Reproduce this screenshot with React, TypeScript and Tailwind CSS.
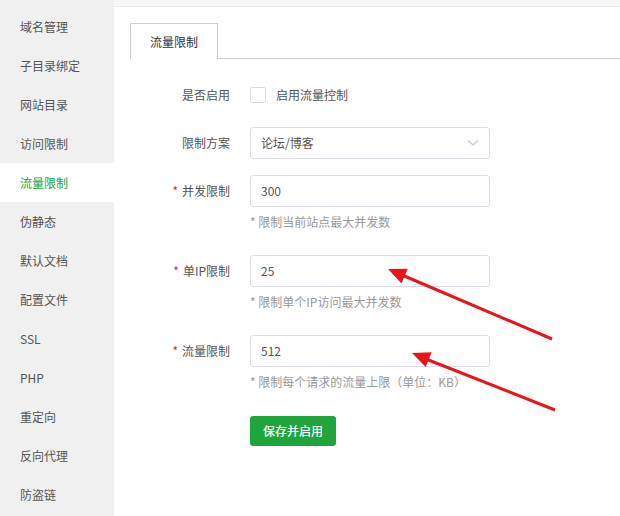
import React from "react";

const items = [
  "域名管理",
  "子目录绑定",
  "网站目录",
  "访问限制",
  "流量限制",
  "伪静态",
  "默认文档",
  "配置文件",
  "SSL",
  "PHP",
  "重定向",
  "反向代理",
  "防盗链",
];

function Label({ text, req }: { text: string; req?: boolean }) {
  return (
    <div className="w-[100px] mr-[20px] flex items-center justify-end h-[32px] text-[12px] text-[#555]">
      {req && <span className="text-[#ef1c24] mr-[4px] text-[12px]">*</span>}
      <span>{text}</span>
    </div>
  );
}

function Field({ label, value, help }: { label: string; value: string; help: string }) {
  return (
    <div className="flex">
      <Label text={label} req />
      <div>
        <div className="w-[240px] h-[32px] border border-[#dfdee6] rounded-[3px] flex items-center pl-[10px] text-[12px] text-[#555]">
          {value}
        </div>
        <div className="mt-[6px] h-[18px] leading-[18px] text-[12px] text-[#999]">{help}</div>
      </div>
    </div>
  );
}

export default function App() {
  return (
    <div
      className="relative w-[620px] h-[516px] flex bg-white overflow-hidden"
      style={{ fontFamily: '"Noto Sans CJK SC", "Noto Sans", sans-serif' }}
    >
      <div className="w-[114px] h-full bg-[#f0f0f0] pt-[7px] flex flex-col">
        {items.map((t) => (
          <div
            key={t}
            className={
              t === "流量限制"
                ? "h-[39px] shrink-0 flex items-center pl-[20px] text-[12px] bg-white text-[#20a53a]"
                : "h-[39px] shrink-0 flex items-center pl-[20px] text-[12px] text-[#555]"
            }
          >
            {t}
          </div>
        ))}
      </div>
      <div className="flex-1 flex flex-col">
        <div className="h-[7px] bg-[#f7f7f7] border-b border-[#ebebeb]"></div>
        <div className="pl-[16px] pt-[16px]">
          <div className="flex items-end">
            <div className="w-[88px] h-[36px] border border-b-0 border-[#cfcbdc] flex items-center justify-center text-[12px] text-[#333] bg-white">
              流量限制
            </div>
            <div className="flex-1 border-b border-[#cfcbdc]"></div>
          </div>
          <div className="pt-[20px]">
            <div className="flex mb-[16px]">
              <Label text="是否启用" />
              <div className="flex items-center h-[32px]">
                <div className="w-[16px] h-[16px] border border-[#dcdcdc] rounded-[2px] bg-white"></div>
                <span className="ml-[10px] text-[12px] text-[#555]">启用流量控制</span>
              </div>
            </div>
            <div className="flex mb-[16px]">
              <Label text="限制方案" />
              <div className="w-[240px] h-[32px] border border-[#dfdee6] rounded-[3px] flex items-center justify-between pl-[10px] pr-[10px] text-[12px] text-[#555]">
                <span>论坛/博客</span>
                <svg width="12" height="8" viewBox="0 0 12 8">
                  <path d="M1 1.5 L6 6 L11 1.5" fill="none" stroke="#c8c8d0" strokeWidth="1.2" />
                </svg>
              </div>
            </div>
            <div className="mb-[24px]">
              <Field label="并发限制" value="300" help="* 限制当前站点最大并发数" />
            </div>
            <div className="mb-[24px]">
              <Field label="单IP限制" value="25" help="* 限制单个IP访问最大并发数" />
            </div>
            <div className="mb-[25px]">
              <Field label="流量限制" value="512" help="* 限制每个请求的流量上限（单位：KB）" />
            </div>
            <div className="flex">
              <div className="w-[100px] mr-[20px]"></div>
              <button className="h-[30px] px-[13px] bg-[#20a53a] rounded-[3px] text-white text-[12px] font-medium">
                保存并启用
              </button>
            </div>
          </div>
        </div>
      </div>
      <svg className="absolute left-0 top-0 pointer-events-none" width="620" height="516">
        <line x1="552" y1="339" x2="402" y2="275" stroke="#e8151c" strokeWidth="3" />
        <polygon points="388,269 401.5,283.5 407.7,268.7" fill="#e8151c" />
        <line x1="555" y1="410" x2="426" y2="359" stroke="#e8151c" strokeWidth="3" />
        <polygon points="412,353 425.7,367.1 431.7,352.3" fill="#e8151c" />
      </svg>
    </div>
  );
}
